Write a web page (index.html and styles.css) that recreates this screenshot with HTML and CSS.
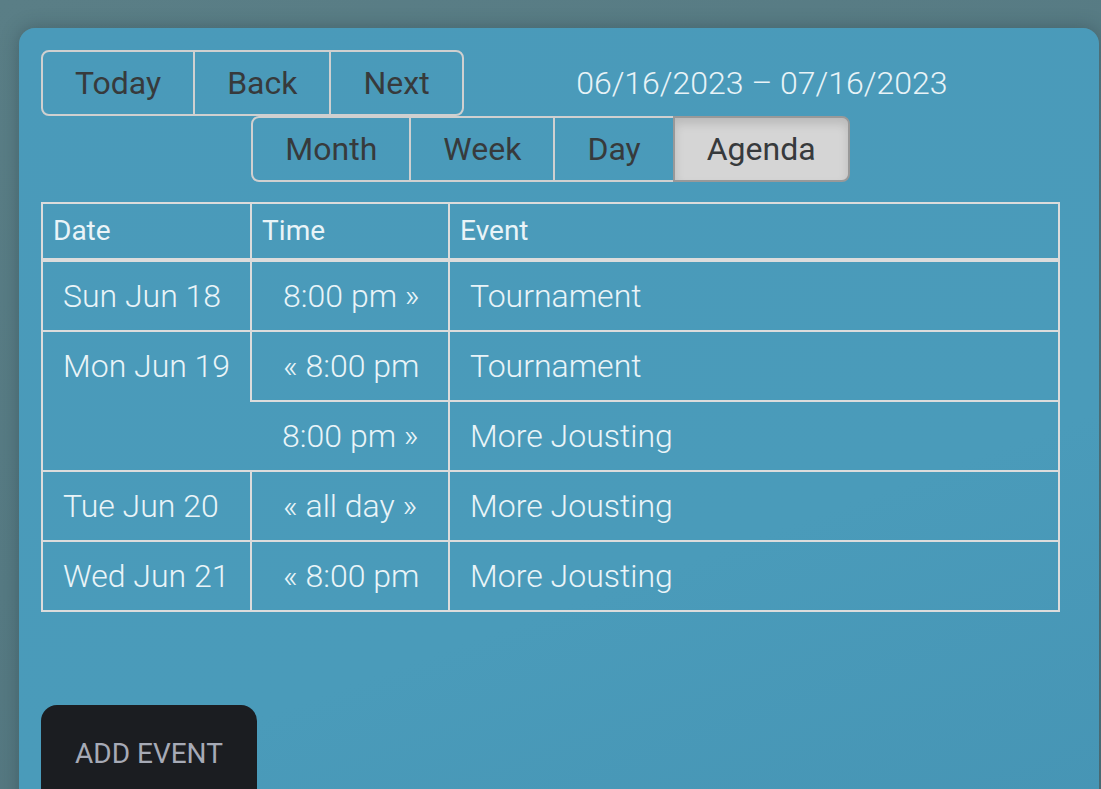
FILE: index.html
```html
<!DOCTYPE html>
<html lang="en">
<head>
<meta charset="utf-8">
<title>Calendar</title>
<link rel="stylesheet" href="styles.css">
</head>
<body>
<div class="panel">
  <div class="calendar">
    <div class="toolbar">
      <span class="btn-group">
        <button type="button">Today</button>
        <button type="button">Back</button>
        <button type="button">Next</button>
      </span>
      <span class="toolbar-label">06/16/2023 – 07/16/2023</span>
      <span class="btn-group">
        <button type="button">Month</button>
        <button type="button">Week</button>
        <button type="button">Day</button>
        <button type="button" class="active">Agenda</button>
      </span>
    </div>
    <table class="agenda">
      <thead>
        <tr>
          <th class="c-date">Date</th>
          <th class="c-time">Time</th>
          <th>Event</th>
        </tr>
      </thead>
      <tbody>
        <tr>
          <td class="c-date">Sun Jun 18</td>
          <td class="c-time">8:00 pm »</td>
          <td>Tournament</td>
        </tr>
        <tr>
          <td class="c-date" rowspan="2">Mon Jun 19</td>
          <td class="c-time">« 8:00 pm</td>
          <td>Tournament</td>
        </tr>
        <tr>
          <td class="c-time">8:00 pm »</td>
          <td>More Jousting</td>
        </tr>
        <tr>
          <td class="c-date">Tue Jun 20</td>
          <td class="c-time">« all day »</td>
          <td>More Jousting</td>
        </tr>
        <tr>
          <td class="c-date">Wed Jun 21</td>
          <td class="c-time">« 8:00 pm</td>
          <td>More Jousting</td>
        </tr>
      </tbody>
    </table>
  </div>
  <button type="button" class="add-event">Add Event</button>
</div>
</body>
</html>
```

FILE: styles.css
```css
html, body {
  margin: 0;
  padding: 0;
  height: 100%;
  overflow: hidden;
}
body {
  background: linear-gradient(160deg, #5a7e86 0%, #567a83 50%, #52747d 100%);
  font-family: Roboto, "Liberation Sans", sans-serif;
  padding-top: 28px;
  padding-left: 19px;
  box-sizing: border-box;
}
.panel {
  width: 1080px;
  height: 900px;
  box-sizing: border-box;
  padding: 22px;
  border-radius: 16px;
  background: linear-gradient(160deg, #4a9aba 0%, #4a9bba 60%, #4593b3 100%);
  box-shadow: 0 0 18px rgba(30, 50, 55, 0.35);
}
.calendar {
  width: 1019px;
}
.toolbar {
  display: flex;
  flex-wrap: wrap;
  justify-content: center;
  align-items: center;
  margin-bottom: 20px;
}
.btn-group {
  display: inline-flex;
}
.btn-group button {
  font-family: Roboto, "Liberation Sans", sans-serif;
  font-size: 32px;
  line-height: normal;
  color: #373a3c;
  background: transparent;
  border: 2px solid #d0d0d0;
  padding: 12px 32px;
  margin: 0;
  border-radius: 0;
}
.btn-group button + button {
  margin-left: -2px;
}
.btn-group button:first-child {
  border-radius: 8px 0 0 8px;
}
.btn-group button:last-child {
  border-radius: 0 8px 8px 0;
}
.btn-group button.active {
  background: #d5d5d5;
  border-color: #999;
  box-shadow: inset 0 6px 10px rgba(0, 0, 0, 0.125);
  position: relative;
}
.toolbar-label {
  flex-grow: 1;
  padding: 0 20px;
  text-align: center;
  font-size: 32px;
  font-weight: 300;
  color: #e8f3f7;
  line-height: 48px;
}
.agenda {
  width: 100%;
  border-collapse: collapse;
  border: 2px solid #dcdcdc;
  color: #e9f4f8;
}
.agenda th {
  font-size: 28px;
  font-weight: 400;
  line-height: 42px;
  padding: 6px 10px 6px;
  text-align: left;
  border-bottom: 4px solid #dcdcdc;
}
.agenda th + th {
  border-left: 2px solid #dcdcdc;
}
.agenda tbody tr {
  border-top: 2px solid #dcdcdc;
}
.agenda td {
  font-size: 32px;
  font-weight: 300;
  line-height: 48px;
  padding: 10px 20px;
  vertical-align: top;
  white-space: nowrap;
}
.agenda td + td {
  border-left: 2px solid #dcdcdc;
}
.agenda .c-date {
  width: 166px;
}
.agenda .c-time {
  width: 155px;
}
.agenda td.c-time {
  padding-left: 31px;
  padding-right: 10px;
}
.add-event {
  display: block;
  margin-top: 93px;
  background: #1b1d21;
  color: #a6aab6;
  border: none;
  border-radius: 16px;
  padding: 32px 34px 40px;
  font-family: Roboto, "Liberation Sans", sans-serif;
  font-size: 28px;
  line-height: normal;
  text-transform: uppercase;
}
```
